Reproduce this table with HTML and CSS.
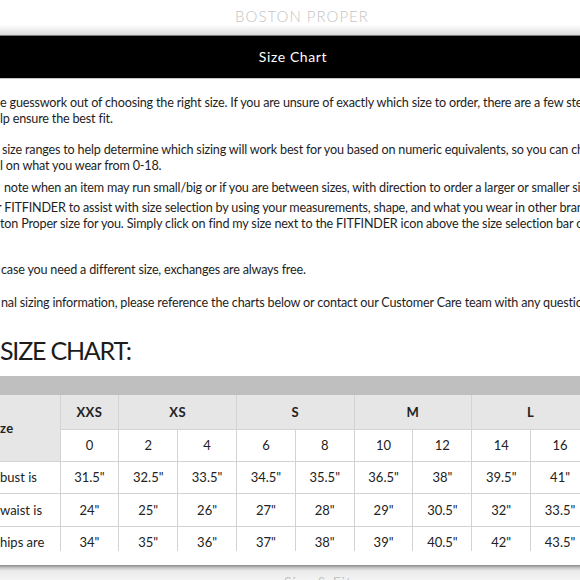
FILE: index.html
```html
<!DOCTYPE html>
<html lang="en">
<head>
<meta charset="utf-8">
<title>Size Chart</title>
<link rel="stylesheet" href="styles.css">
</head>
<body>
<div class="app">
  <header class="brand"><span class="brand-name">BOSTON PROPER</span></header>
  <div class="titlebar">Size Chart</div>
  <main class="content">
    <div class="para p1">
      <div class="line">e guesswork out of choosing the right size. If you are unsure of exactly which size to order, there are a few steps we have taken to</div>
      <div class="line">lp ensure the best fit.</div>
    </div>
    <div class="para p2">
      <div class="line in2">size ranges to help determine which sizing will work best for you based on numeric equivalents, so you can choose your size</div>
      <div class="line">l on what you wear from 0-18.</div>
    </div>
    <div class="para p3">
      <div class="line in4">note when an item may run small/big or if you are between sizes, with direction to order a larger or smaller size.</div>
    </div>
    <div class="para p4">
      <div class="line out3">r FITFINDER to assist with size selection by using your measurements, shape, and what you wear in other brands to find</div>
      <div class="line">ton Proper size for you. Simply click on find my size next to the FITFINDER icon above the size selection bar on any</div>
    </div>
    <div class="para p5">
      <div class="line in1">case you need a different size, exchanges are always free.</div>
    </div>
    <div class="para p6">
      <div class="line in1">nal sizing information, please reference the charts below or contact our Customer Care team with any questions.</div>
    </div>
    <h2 class="chart-title">SIZE CHART:</h2>
    <div class="table-wrap">
      <div class="table-band"></div>
      <table class="size-table">
        <colgroup>
          <col class="c-label">
          <col><col><col><col><col><col><col><col><col>
        </colgroup>
        <tr class="row-head">
          <th class="corner" rowspan="2">ze</th>
          <th>XXS</th>
          <th colspan="2">XS</th>
          <th colspan="2">S</th>
          <th colspan="2">M</th>
          <th colspan="2">L</th>
        </tr>
        <tr class="row-num">
          <td>0</td><td>2</td><td>4</td><td>6</td><td>8</td><td>10</td><td>12</td><td>14</td><td>16</td>
        </tr>
        <tr class="row-data">
          <td class="label in4">bust is</td>
          <td>31.5"</td><td>32.5"</td><td>33.5"</td><td>34.5"</td><td>35.5"</td><td>36.5"</td><td>38"</td><td>39.5"</td><td>41"</td>
        </tr>
        <tr class="row-data">
          <td class="label in1">waist is</td>
          <td>24"</td><td>25"</td><td>26"</td><td>27"</td><td>28"</td><td>29"</td><td>30.5"</td><td>32"</td><td>33.5"</td>
        </tr>
        <tr class="row-data">
          <td class="label">hips are</td>
          <td>34"</td><td>35"</td><td>36"</td><td>37"</td><td>38"</td><td>39"</td><td>40.5"</td><td>42"</td><td>43.5"</td>
        </tr>
      </table>
    </div>
  </main>
  <footer class="next"><span class="next-label">Size &amp; Fit</span></footer>
</div>
</body>
</html>
```

FILE: styles.css
```css
* { box-sizing: border-box; margin: 0; padding: 0; }
html, body { width: 580px; height: 580px; overflow: hidden; background: #fff; }
body { font-family: Lato, "Open Sans", sans-serif; color: #222; }

.app { width: 580px; height: 580px; overflow: hidden; display: flex; flex-direction: column; }

.brand {
  height: 36px;
  flex: none;
  background: linear-gradient(to bottom, #fff 0, #fff 25px, #dadada 35px, #7a7a7a 35px, #7a7a7a 36px);
  text-align: center;
  padding-left: 24px;
}
.brand-name {
  display: block;
  padding-top: 8px;
  font-size: 15px;
  line-height: 16px;
  letter-spacing: 1px;
  font-weight: 300;
  color: #c4c4c4;
}

.titlebar {
  height: 43px;
  flex: none;
  background: #000;
  border-bottom: 1px solid #c4c4c4;
  color: #fff;
  text-align: center;
  padding-left: 6px;
  font-size: 14px;
  line-height: 42px;
  letter-spacing: 0.6px;
}

.content { flex: none; padding-top: 16px; }

.line {
  white-space: nowrap;
  overflow: hidden;
  font-size: 12.6px;
  line-height: 16px;
  letter-spacing: -0.18px;
  color: #1e1e1e;
}
.in1 { padding-left: 1px; }
.in2 { padding-left: 2px; }
.in4 { padding-left: 4px; }
.out3 { text-indent: -3px; }

.p2 { margin-top: 15px; }
.p3 { margin-top: 6px; }
.p4 { margin-top: 4px; }
.p5 { margin-top: 30px; }
.p6 { margin-top: 17px; }

.chart-title {
  margin-top: 23px;
  font-size: 25px;
  line-height: 32px;
  font-weight: 400;
  letter-spacing: -1.2px;
  color: #1c1c1c;
}

.table-wrap {
  margin-top: 10px;
  height: 175px;
  overflow: hidden;
  width: 580px;
}
.table-band { height: 19px; background: #bfbfbf; }

.size-table {
  width: 590px;
  table-layout: fixed;
  border-collapse: collapse;
  font-size: 13px;
  color: #222;
}
.c-label { width: 60px; }
.size-table th, .size-table td {
  border: 1px solid #d3d3d3;
  text-align: center;
  vertical-align: middle;
  padding: 0;
}
.size-table tr:first-child th { border-top: none; }
.size-table .corner, .size-table .label { border-left: none; }
.row-head th {
  height: 34px;
  background: #e6e6e6;
  font-weight: 700;
  font-size: 13px;
  letter-spacing: 0.5px;
}
.size-table .corner {
  text-align: left;
  background: #e6e6e6;
}
.row-num td { height: 32px; background: #fff; }
.row-data td { height: 32.5px; }
.size-table .label { text-align: left; }

.next {
  flex: 1;
  margin-top: 14px;
  background: linear-gradient(to bottom, #8a8a8a 0, #c9c9c9 3px, #ebebeb 6px, #f3f3f3 100%);
  text-align: center;
  padding-left: 56px;
  overflow: hidden;
}
.next-label {
  display: block;
  padding-top: 9px;
  font-size: 14px;
  line-height: 16px;
  letter-spacing: 1px;
  color: #c4c4c4;
}
```
